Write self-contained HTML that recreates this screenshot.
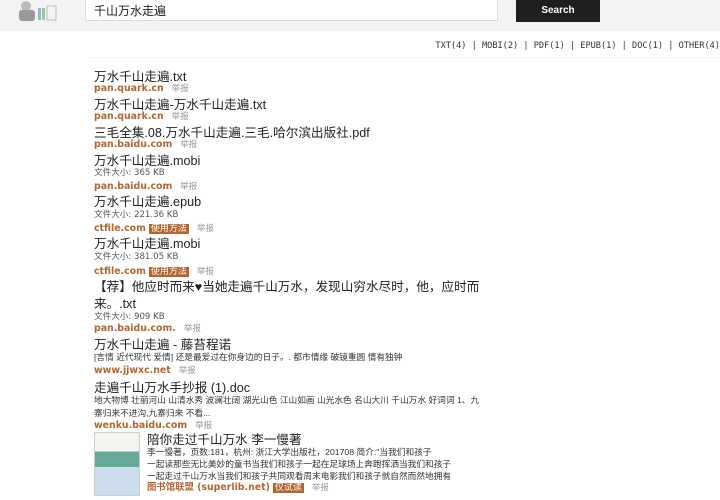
<!DOCTYPE html>
<html><head><meta charset="utf-8"><style>
body{margin:0;width:720px;height:500px;background:#fff;font-family:"Liberation Sans","Noto Sans CJK SC",sans-serif;overflow:hidden;position:relative}
.hd{position:absolute;left:0;top:0;width:720px;height:31px;background:#f3f3f3}
.inp{position:absolute;left:85px;top:-1px;width:413px;height:22px;background:#fff;border:1px solid #ddd;font-size:12px;line-height:22px;padding-left:8px;box-sizing:border-box;color:#222}
.btn{position:absolute;left:516px;top:-1px;width:84px;height:23px;background:#1e1e1e;color:#fff;font-size:10px;font-weight:bold;text-align:center;line-height:23px}
.flt{position:absolute;right:0;top:41px;font-family:"DejaVu Sans Mono","Noto Sans CJK SC",monospace;font-size:8.6px;color:#333;white-space:nowrap}
.hr{position:absolute;left:88px;top:57px;width:632px;height:1px;background:#f2f2f2}
.l{position:absolute;left:94px;white-space:nowrap}
.t{font-size:12.6px;color:#222}
.s{font-family:"DejaVu Sans","Noto Sans CJK SC",sans-serif;font-size:8.6px;color:#555}
.d{font-size:8.7px;color:#333}
.src{font-family:"DejaVu Sans","Noto Sans CJK SC",sans-serif;font-size:9.4px;color:#b5652e;font-weight:bold}
.src i{font-style:normal;font-weight:normal;color:#999;font-size:8.5px;margin-left:8px}
.tag{background:#b5652e;color:#fff;font-weight:normal;font-size:9px;padding:0 2px;margin-left:3px}
</style></head><body>
<div class="hd"></div>
<div style="position:absolute;left:14px;top:0;width:46px;height:22px">
<svg width="46" height="22"><circle cx="12" cy="6" r="5" fill="#bbb"/><rect x="5" y="10" width="16" height="11" rx="3" fill="#999"/><rect x="24" y="8" width="3" height="12" fill="#8bc"/><rect x="28" y="8" width="3" height="12" fill="#9c9"/><rect x="33" y="6" width="9" height="14" fill="none" stroke="#bbb"/></svg></div>
<div class="inp">千山万水走遍</div>
<div class="btn">Search</div>
<div class="flt">TXT(4) | MOBI(2) | PDF(1) | EPUB(1) | DOC(1) | OTHER(4)</div>
<div class="hr"></div>

<div class="l t" style="top:66px">万水千山走遍.txt</div>
<div class="l src" style="top:82px">pan.quark.cn<i>举报</i></div>
<div class="l t" style="top:94px">万水千山走遍-万水千山走遍.txt</div>
<div class="l src" style="top:110px">pan.quark.cn<i>举报</i></div>
<div class="l t" style="top:122px">三毛全集.08.万水千山走遍.三毛.哈尔滨出版社.pdf</div>
<div class="l src" style="top:138px">pan.baidu.com<i>举报</i></div>
<div class="l t" style="top:150px">万水千山走遍.mobi</div>
<div class="l s" style="top:166px">文件大小: 365 KB</div>
<div class="l src" style="top:180px">pan.baidu.com<i>举报</i></div>
<div class="l t" style="top:191px">万水千山走遍.epub</div>
<div class="l s" style="top:208px">文件大小: 221.36 KB</div>
<div class="l src" style="top:221px">ctfile.com<span class="tag">使用方法</span><i>举报</i></div>
<div class="l t" style="top:233px">万水千山走遍.mobi</div>
<div class="l s" style="top:250px">文件大小: 381.05 KB</div>
<div class="l src" style="top:264px">ctfile.com<span class="tag">使用方法</span><i>举报</i></div>
<div class="l t" style="top:276px">【荐】他应时而来♥当她走遍千山万水，发现山穷水尽时，他，应时而</div>
<div class="l t" style="top:293px">来。.txt</div>
<div class="l s" style="top:310px">文件大小: 909 KB</div>
<div class="l src" style="top:322px">pan.baidu.com.<i>举报</i></div>
<div class="l t" style="top:334px">万水千山走遍 - 藤苔程诺</div>
<div class="l d" style="top:350px">[言情 近代现代 爱情] 还是最爱过在你身边的日子。. 都市情缘 破镜重圆 情有独钟</div>
<div class="l src" style="top:364px">www.jjwxc.net<i>举报</i></div>
<div class="l t" style="top:377px">走遍千山万水手抄报 (1).doc</div>
<div class="l d" style="top:393px">地大物博 壮丽河山 山清水秀 波澜壮阔 湖光山色 江山如画 山光水色 名山大川 千山万水 好词词 1、九</div>
<div class="l d" style="top:406px">寨归来不进沟,九寨归来 不看...</div>
<div class="l src" style="top:419px">wenku.baidu.com<i>举报</i></div>
<div style="position:absolute;left:94px;top:432px;width:44px;height:62px;border:1px solid #ccc;background:linear-gradient(#f4f4f0 0 30%,#6a9 30% 55%,#cde 55% 100%)"></div>
<div class="l t" style="left:147px;top:429px">陪你走过千山万水 李一慢著</div>
<div class="l d" style="left:147px;top:445px">李一慢著，页数:181，杭州: 浙江大学出版社，201708 简介:"当我们和孩子</div>
<div class="l d" style="left:147px;top:457px">一起读那些无比美妙的童书当我们和孩子一起在足球场上奔跑挥洒当我们和孩子</div>
<div class="l d" style="left:147px;top:469px">一起走过千山万水当我们和孩子共同观看周末电影我们和孩子就自然而然地拥有</div>
<div class="l src" style="left:147px;top:479px">图书馆联盟 (superlib.net)<span class="tag">仅试读</span><i>举报</i></div>
</body></html>
